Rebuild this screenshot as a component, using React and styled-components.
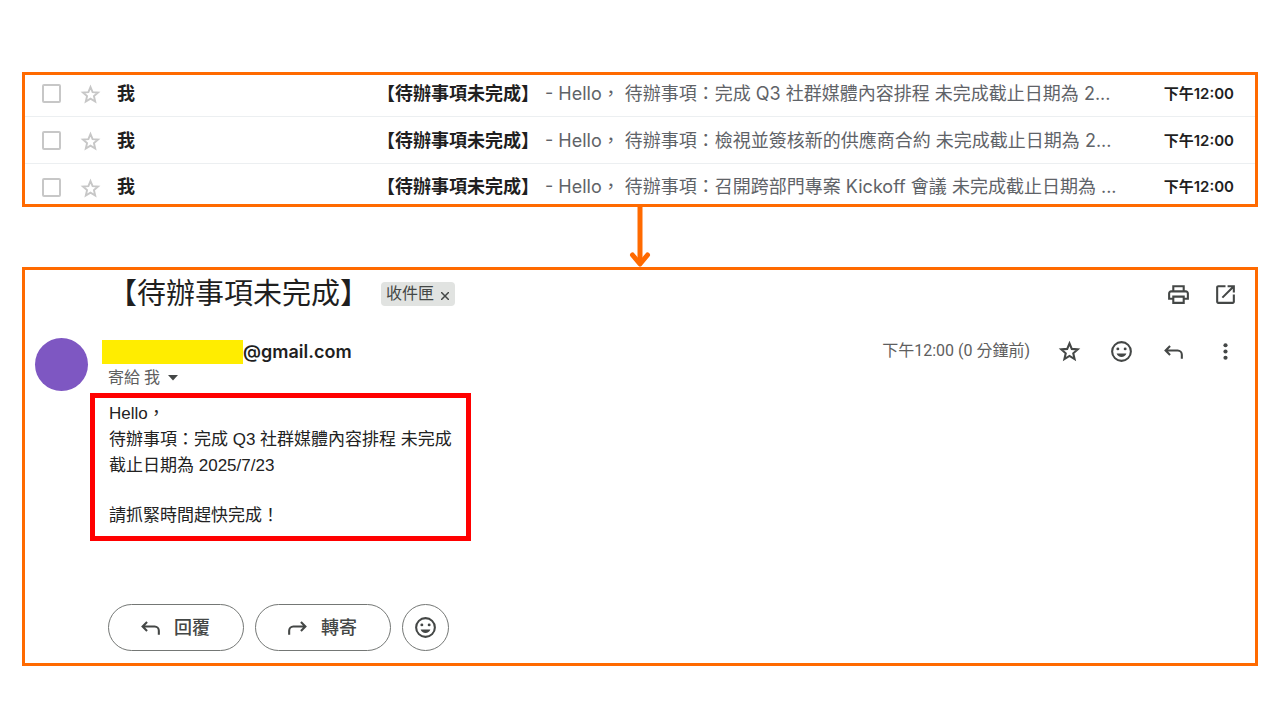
import React, { useState } from 'react';
import styled, { createGlobalStyle } from 'styled-components';

const sans = 'Roboto, "Noto Sans CJK TC", sans-serif';
const strong = 'Inter, "Noto Sans CJK TC", sans-serif';
const plain = '"Liberation Sans", "Noto Sans CJK TC", sans-serif';

const GlobalStyle = createGlobalStyle`
  * {
    box-sizing: border-box;
  }

  body {
    margin: 0;
    background: #fff;
    color: #1f1f1f;
    font-family: ${sans};
  }

  button {
    font-family: inherit;
    cursor: pointer;
  }
`;

const Page = styled.main`
  display: flex;
  flex-direction: column;
  padding: 72px 22px 54px;
`;

const Panel = styled.section`
  border: 3px solid #ff6a00;
  background: #fff;
`;

const MailList = styled.ul`
  list-style: none;
  margin: 0;
  padding: 1px 0 0;
`;

const MailRow = styled.li`
  display: flex;
  align-items: center;
  padding: 6px 21px 5px 17px;
  border-bottom: 1px solid #eceff1;
  font-size: 18px;
  line-height: 35px;

  &:first-child {
    padding-top: 0;
  }

  &:last-child {
    padding-bottom: 0;
    border-bottom: none;
    line-height: 34px;
  }
`;

const Checkbox = styled.input`
  appearance: none;
  flex: none;
  width: 19px;
  height: 19px;
  margin: 0;
  border: 2px solid #c7c7c7;
  border-radius: 2px;

  &:checked {
    background: #5f6368;
  }
`;

const IconButton = styled.button`
  display: flex;
  flex: none;
  padding: 0;
  border: none;
  background: none;
  color: ${(props) => props.$color || '#444746'};
`;

const RowStar = styled(IconButton)`
  margin: 0 15px 0 18px;
  padding-top: 2px;
`;

const Sender = styled.span`
  flex: 0 0 260px;
  font-weight: 700;
`;

const Subject = styled.span`
  flex: none;
  font-weight: 700;
`;

const Snippet = styled.span`
  flex: 1;
  min-width: 0;
  padding-left: 6px;
  overflow: hidden;
  white-space: nowrap;
  color: #5f6368;
  font-family: ${strong};
`;

const RowTime = styled.time`
  flex: none;
  font-family: ${strong};
  font-size: 15px;
  font-weight: 600;
`;

const ArrowDown = styled.svg`
  display: block;
  align-self: center;
`;

const Message = styled(Panel)`
  padding: 6px 17px 12px 10px;
`;

const TitleBar = styled.header`
  display: flex;
  align-items: center;
  padding-left: 73px;
`;

const Title = styled.h1`
  margin: 0 12px 0 0;
  font-size: 29px;
  font-weight: 400;
  line-height: 36px;
`;

const Label = styled.span`
  display: flex;
  align-items: center;
  gap: 7px;
  height: 24px;
  padding: 0 6px 0 5px;
  border-radius: 4px;
  background: #e1e3e1;
  color: #444746;
  font-size: 16px;
  line-height: 22px;
`;

const RemoveButton = styled(IconButton)`
  padding-top: 3px;
`;

const TitleActions = styled.div`
  display: flex;
  gap: 22px;
  margin-left: auto;
`;

const Details = styled.div`
  display: flex;
  align-items: flex-start;
  margin-top: 26px;
`;

const Avatar = styled.div`
  flex: none;
  width: 53px;
  height: 53px;
  border-radius: 50%;
  background: #7e57c2;
`;

const From = styled.div`
  padding: 1px 0 2px 14px;
`;

const Address = styled.div`
  display: flex;
  align-items: center;
  font-family: ${strong};
  font-size: 18px;
  font-weight: 600;
  line-height: 26px;
`;

const HiddenName = styled.span`
  width: 141px;
  height: 24px;
  background: #ffed00;
`;

const Recipient = styled.button`
  display: flex;
  align-items: center;
  gap: 8px;
  margin-left: 6px;
  padding: 0;
  border: none;
  background: none;
  color: #5e5e5e;
  font-size: 16px;
  line-height: 26px;
`;

const Meta = styled.div`
  display: flex;
  align-items: center;
  gap: 27px;
  height: 27px;
  margin-left: auto;
  color: #5e5e5e;
  font-size: 16px;
  line-height: 24px;

  time {
    padding-bottom: 2px;
  }
`;

const Body = styled.div`
  width: fit-content;
  margin-left: 55px;
  padding: 3px 14px 7px;
  border: 5px solid #ff0000;
  color: #222;
  font-family: ${plain};
  font-size: 17px;
  line-height: 26px;

  p {
    margin: 0;
  }

  p + p {
    margin-top: 24px;
  }
`;

const Replies = styled.footer`
  display: flex;
  gap: 11px;
  margin: 63px 0 0 73px;
`;

const PillButton = styled.button`
  display: flex;
  align-items: center;
  justify-content: center;
  gap: 11px;
  width: ${(props) => (props.$round ? '47px' : '136px')};
  height: 47px;
  padding: ${(props) => (props.$round ? '0' : '0 4px 0 0')};
  border: 1px solid #747775;
  border-radius: 24px;
  background: #fff;
  color: #444746;
  font-size: 18px;
  font-weight: 500;
  line-height: 24px;
`;

function Svg({ size = 25, children }) {
  return (
    <svg width={size} height={size} viewBox="0 0 24 24" fill="currentColor" aria-hidden="true">
      {children}
    </svg>
  );
}

const StarIcon = ({ size }) => (
  <Svg size={size}>
    <path
      d="M12 4.200l2.200 5.300 5.700.5-4.300 3.700 1.300 5.600-4.900-3-4.900 3 1.300-5.600L4.100 10l5.700-.5L12 4.200z"
      fill="none"
      stroke="currentColor"
      strokeWidth="2"
    />
  </Svg>
);

const PrintIcon = () => (
  <Svg>
    <path d="M19 8h-1V3H6v5H5c-1.66 0-3 1.34-3 3v6h4v4h12v-4h4v-6c0-1.66-1.34-3-3-3zM8 5h8v3H8V5zm8 14H8v-4h8v4zm2-4v-2H6v2H4v-4c0-.55.45-1 1-1h14c.55 0 1 .45 1 1v4h-2z" />
  </Svg>
);

const OpenIcon = () => (
  <Svg>
    <path d="M5 21c-1.100 0-2-.9-2-2V5c0-1.100.9-2 2-2h7v2H5v14h14v-7h2v7c0 1.100-.9 2-2 2H5zm4.700-5.300l-1.400-1.400L17.600 5H14V3h7v7h-2V6.400l-9.300 9.300z" />
  </Svg>
);

const SmileIcon = () => (
  <Svg>
    <circle cx="12" cy="12" r="9" fill="none" stroke="currentColor" strokeWidth="2" />
    <circle cx="8.500" cy="9.500" r="1.400" />
    <circle cx="15.500" cy="9.500" r="1.400" />
    <path d="M7.300 14h9.400c-.8 2-2.500 3.300-4.700 3.300S8.100 16 7.300 14z" />
  </Svg>
);

const TurnArrow = ({ d }) => (
  <Svg>
    <path d={d} fill="none" stroke="currentColor" strokeWidth="2" />
  </Svg>
);

const ReplyIcon = () => <TurnArrow d="M8.700 6.800L4.400 11.100l4.300 4.300M4.400 11.100H16a4 4 0 0 1 4 4V19" />;

const ForwardIcon = () => <TurnArrow d="M15.300 6.800l4.300 4.300-4.300 4.300M19.600 11.100H8a4 4 0 0 0-4 4V19" />;

const MoreIcon = () => (
  <Svg>
    <circle cx="12" cy="6" r="2" />
    <circle cx="12" cy="12" r="2" />
    <circle cx="12" cy="18" r="2" />
  </Svg>
);

const mails = [
  { id: 1, snippet: '完成 Q3 社群媒體內容排程 未完成截止日期為 2...' },
  { id: 2, snippet: '檢視並簽核新的供應商合約 未完成截止日期為 2...' },
  { id: 3, snippet: '召開跨部門專案 Kickoff 會議 未完成截止日期為 ...' },
];

function Mail({ snippet }) {
  const [checked, setChecked] = useState(false);

  return (
    <MailRow>
      <Checkbox
        type="checkbox"
        aria-label="選取"
        checked={checked}
        onChange={(e) => setChecked(e.target.checked)}
      />
      <RowStar type="button" aria-label="加上星號" $color="#c7c7c7">
        <StarIcon size={23} />
      </RowStar>
      <Sender>我</Sender>
      <Subject>【待辦事項未完成】</Subject>
      <Snippet>- Hello， 待辦事項：{snippet}</Snippet>
      <RowTime>下午12:00</RowTime>
    </MailRow>
  );
}

function App() {
  return (
    <Page lang="zh-Hant">
      <GlobalStyle />
      <Panel>
        <MailList>
          {mails.map((mail) => (
            <Mail key={mail.id} snippet={mail.snippet} />
          ))}
        </MailList>
      </Panel>
      <ArrowDown width="24" height="60" viewBox="0 0 24 60" fill="none" stroke="#ff6a00" strokeWidth="5">
        <path d="M12 0v56" />
        <path d="M4.500 48l7.500 9 7.500-9" strokeLinecap="round" strokeLinejoin="round" />
      </ArrowDown>
      <Message>
        <TitleBar>
          <Title>【待辦事項未完成】</Title>
          <Label>
            收件匣
            <RemoveButton type="button" aria-label="移除標籤">
              <svg width="8" height="8" viewBox="0 0 8 8" stroke="currentColor" strokeWidth="1.500">
                <path d="M0 0l8 8M8 0l-8 8" />
              </svg>
            </RemoveButton>
          </Label>
          <TitleActions>
            <IconButton type="button" aria-label="列印"><PrintIcon /></IconButton>
            <IconButton type="button" aria-label="在新視窗開啟"><OpenIcon /></IconButton>
          </TitleActions>
        </TitleBar>
        <Details>
          <Avatar />
          <From>
            <Address>
              <HiddenName />
              @gmail.com
            </Address>
            <Recipient type="button">
              寄給 我
              <svg width="10" height="6" viewBox="0 0 10 6" fill="#444746">
                <path d="M0 0h10L5 5.500z" />
              </svg>
            </Recipient>
          </From>
          <Meta>
            <time>下午12:00 (0 分鐘前)</time>
            <IconButton type="button" aria-label="加上星號"><StarIcon /></IconButton>
            <IconButton type="button" aria-label="新增回應"><SmileIcon /></IconButton>
            <IconButton type="button" aria-label="回覆"><ReplyIcon /></IconButton>
            <IconButton type="button" aria-label="更多"><MoreIcon /></IconButton>
          </Meta>
        </Details>
        <Body>
          <p>
            Hello，
            <br />
            待辦事項：完成 Q3 社群媒體內容排程 未完成
            <br />
            截止日期為 2025/7/23
          </p>
          <p>請抓緊時間趕快完成！</p>
        </Body>
        <Replies>
          <PillButton type="button"><ReplyIcon />回覆</PillButton>
          <PillButton type="button"><ForwardIcon />轉寄</PillButton>
          <PillButton type="button" $round aria-label="新增回應"><SmileIcon /></PillButton>
        </Replies>
      </Message>
    </Page>
  );
}

export default App;
